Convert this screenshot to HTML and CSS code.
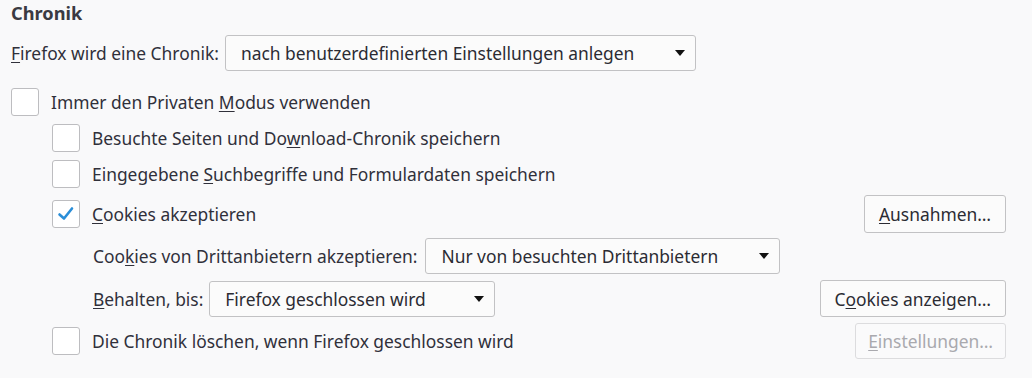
FILE: index.html
```html
<!DOCTYPE html>
<html lang="de">
<head>
    <meta charset="UTF-8">
    <title>Chronik</title>
    <link rel="stylesheet" href="styles.css">
</head>
<body>
    <div class="section">
        <h2>Chronik</h2>

        <div class="row history-mode">
            <label><u>F</u>irefox wird eine Chronik:</label>
            <div class="select select-mode">
                <span>nach benutzerdefinierten Einstellungen anlegen</span>
                <span class="arrow"></span>
            </div>
        </div>

        <div class="row check-row top-check">
            <span class="checkbox"></span>
            <span>Immer den Privaten <u>M</u>odus verwenden</span>
        </div>

        <div class="indent">
            <div class="row check-row">
                <span class="checkbox"></span>
                <span>Besuchte Seiten und Do<u>w</u>nload-Chronik speichern</span>
            </div>
            <div class="row check-row">
                <span class="checkbox"></span>
                <span>Eingegebene <u>S</u>uchbegriffe und Formulardaten speichern</span>
            </div>
            <div class="row check-row cookies-row">
                <span class="checkbox checked">
                    <svg width="18" height="18" viewBox="0 0 18 18"><path d="M2.5 9.5 L7 13.5 L15 3.5" fill="none" stroke="#2a8ed8" stroke-width="2.6" stroke-linecap="round" stroke-linejoin="round"/></svg>
                </span>
                <span><u>C</u>ookies akzeptieren</span>
                <button class="btn btn-right"><u>A</u>usnahmen…</button>
            </div>

            <div class="sub">
                <div class="row sub-row third-party">
                    <label>Coo<u>k</u>ies von Drittanbietern akzeptieren:</label>
                    <div class="select select-third">
                        <span>Nur von besuchten Drittanbietern</span>
                        <span class="arrow"></span>
                    </div>
                </div>
                <div class="row sub-row keep-row">
                    <label><u>B</u>ehalten, bis:</label>
                    <div class="select select-keep">
                        <span>Firefox geschlossen wird</span>
                        <span class="arrow"></span>
                    </div>
                    <button class="btn btn-right">C<u>o</u>okies anzeigen…</button>
                </div>
            </div>

            <div class="row check-row clear-row">
                <span class="checkbox"></span>
                <span>Die Chronik löschen, wenn Firefox <u>g</u>eschlossen wird</span>
                <button class="btn btn-right" disabled><u>E</u>instellungen…</button>
            </div>
        </div>
    </div>
</body>
</html>
```

FILE: styles.css
```css
body {
    margin: 0;
    background-color: #f9f9fa;
    color: #30303a;
    font-family: 'Noto Sans', 'Open Sans', sans-serif;
    font-size: 17.4px;
}

.section {
    padding: 0 26px 0 11px;
}

h2 {
    margin: 0;
    height: 35px;
    padding-top: 1px;
    box-sizing: border-box;
    font-size: 18.2px;
    font-weight: bold;
    color: #3a3a42;
}

u {
    text-decoration: underline;
    text-underline-offset: 2px;
}

.row {
    display: flex;
    align-items: center;
}

.history-mode label {
    margin-right: 6px;
}

.select {
    display: flex;
    align-items: center;
    justify-content: space-between;
    height: 36px;
    box-sizing: border-box;
    padding: 0 10px 0 15px;
    border: 1px solid #c2c2c4;
    border-radius: 3px;
    background-color: #fbfbfb;
    color: #2b2b33;
}

.arrow {
    width: 0;
    height: 0;
    border-left: 5.5px solid transparent;
    border-right: 5.5px solid transparent;
    border-top: 6px solid #111;
}

.select-mode {
    width: 471px;
}

.select-third {
    width: 355px;
}

.sub-row .select-third {
    margin-left: 2px;
}

.select-keep {
    width: 286px;
}

.checkbox {
    display: flex;
    align-items: center;
    justify-content: center;
    width: 28px;
    height: 28px;
    box-sizing: border-box;
    margin-right: 12px;
    border: 1px solid #bdbdc0;
    border-radius: 3px;
    background-color: #fff;
    flex-shrink: 0;
}

.check-row {
    height: 28px;
    margin-top: 8px;
}

.top-check {
    margin-top: 17px;
}

.indent {
    padding-left: 41px;
}

.cookies-row {
    height: 38px;
    margin-top: 7px;
}

.sub {
    padding-left: 41px;
}

.sub-row label {
    margin-right: 6px;
}

.third-party {
    margin-top: 5px;
}

.keep-row {
    height: 37px;
    margin-top: 6px;
}

.clear-row {
    height: 36px;
    margin-top: 6px;
}

.btn {
    height: 38px;
    padding: 0 14px;
    border: 1px solid #c2c2c4;
    border-radius: 3px;
    background-color: #fbfbfb;
    color: #2b2b33;
    font-family: inherit;
    font-size: 17.4px;
}

.keep-row .btn {
    height: 37px;
}

.clear-row .btn {
    height: 36px;
    padding: 0 12px;
}

.btn-right {
    margin-left: auto;
}

.btn:disabled {
    color: #a9a9ae;
    border-color: #dcdcde;
    background-color: #fafafb;
}
```
